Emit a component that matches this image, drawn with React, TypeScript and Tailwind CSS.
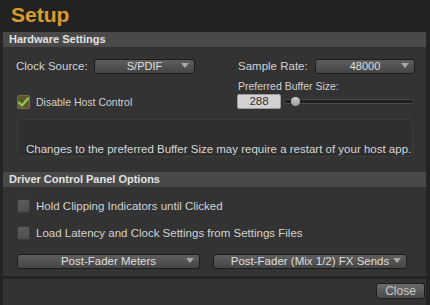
import React from "react";

function Dropdown({ label, w, size = "text-[11.5px]" }: { label: string; w: string; size?: string }) {
  return (
    <div
      className={`relative h-[15px] ${w} rounded-[3px] border border-[#1c1c1c] bg-gradient-to-b from-[#5e5e5e] to-[#454545] text-[#dedede] ${size} leading-[13px] flex items-center justify-center`}
    >
      <span>{label}</span>
      <svg className="absolute right-[5px] top-[3px]" width="8" height="5" viewBox="0 0 8 5">
        <path d="M0 0 H8 L4 5 Z" fill="#a8a8a8" />
      </svg>
    </div>
  );
}

function Check({ checked }: { checked?: boolean }) {
  return (
    <div
      className={`w-[13px] h-[14px] rounded-[2px] border flex items-center justify-center ${
        checked
          ? "border-[#7a6d45] bg-[#5f5533]"
          : "border-[#3a3a3a] bg-gradient-to-b from-[#5c5c5c] to-[#4e4e4e]"
      }`}
    >
      {checked && (
        <svg width="11" height="10" viewBox="0 0 11 10">
          <path d="M1 5.5 L4 8.5 L10 1.5" fill="none" stroke="#86d13e" strokeWidth="2.2" strokeLinecap="round" strokeLinejoin="round" />
        </svg>
      )}
    </div>
  );
}

export default function App() {
  return (
    <div
      className="w-[430px] h-[305px] bg-[#242424] flex flex-col overflow-hidden text-[#d2d2d2]"
      style={{ fontFamily: '"Liberation Sans", Arial, sans-serif' }}
    >
      <div className="h-[32px] pl-[11px] pt-[3px] bg-[#222222] text-[21px] leading-[24px] font-bold text-[#dd9b2a]">
        Setup
      </div>
      <div className="pl-[3px] pr-[4px] flex flex-col">
        {/* Hardware header */}
        <div className="h-[15px] bg-[#494949] pl-[6px] text-[11px] leading-[15px] font-bold text-[#e2e2e2]">
          Hardware Settings
        </div>
        <div className="h-[125px] bg-[#333333] pl-[14px] flex flex-col text-[11.5px]">
          <div className="mt-[12px] h-[15px] flex items-center">
            <div className="w-[221px] flex items-center">
              <span className="w-[78px] -ml-[1px] leading-[15px]">Clock Source:</span>
              <Dropdown label="S/PDIF" w="w-[101px]" size="text-[11px]" />
            </div>
            <div className="flex items-center">
              <span className="w-[77px] leading-[15px]">Sample Rate:</span>
              <Dropdown label="48000" w="w-[100px]" size="text-[11px]" />
            </div>
          </div>
          <div className="mt-[6px] h-[13px] pl-[221px] text-[10.5px] leading-[13px]">
            Preferred Buffer Size:
          </div>
          <div className="mt-[1px] h-[15px] flex items-center">
            <div className="w-[220px] flex items-center">
              <Check checked />
              <span className="ml-[6px] text-[10.5px] leading-[14px]">Disable Host Control</span>
            </div>
            <div className="w-[44px] h-[15px] rounded-[2px] border border-[#9a9a9a] bg-[#d2d2d2] text-[#333] text-[11.5px] leading-[13px] flex items-center justify-center">
              288
            </div>
            <div className="relative ml-[3px] w-[130px] h-[5px] rounded-full border border-[#4a4a4a] bg-[#1e1e1e]">
              <div className="absolute left-[6px] -top-[3px] w-[9px] h-[9px] rounded-full bg-gradient-to-b from-[#d0d0d0] to-[#9a9a9a]" />
            </div>
          </div>
          <div className="mt-[10px] w-[396px] h-[38px] rounded-[4px] border border-[#3c3c3c] bg-[#2f2f2f] pl-[8px] pt-[23px] text-[11.5px] leading-[13px] text-[#d6d6d6]">
            Changes to the preferred Buffer Size may require a restart of your host app.
          </div>
        </div>
        {/* Driver header */}
        <div className="h-[15px] bg-[#494949] pl-[6px] text-[11px] leading-[15px] font-bold text-[#e2e2e2]">
          Driver Control Panel Options
        </div>
        <div className="h-[89px] bg-[#333333] pl-[14px] flex flex-col text-[11.5px]">
          <div className="mt-[12px] h-[13px] flex items-center">
            <Check />
            <span className="ml-[6px] leading-[14px]">Hold Clipping Indicators until Clicked</span>
          </div>
          <div className="mt-[14px] h-[13px] flex items-center">
            <Check />
            <span className="ml-[6px] leading-[14px]">Load Latency and Clock Settings from Settings Files</span>
          </div>
          <div className="mt-[15px] flex items-center gap-[13px]">
            <Dropdown label="Post-Fader Meters" w="w-[183px]" />
            <Dropdown label="Post-Fader (Mix 1/2) FX Sends" w="w-[194px]" />
          </div>
        </div>
        <div className="h-[3px]" />
        <div className="h-[26px] bg-[#333333] flex justify-end pr-[1px] pt-[4px]">
          <div className="w-[49px] h-[16px] rounded-[3px] border border-[#1e1e1e] bg-gradient-to-b from-[#6c6c6c] to-[#4a4a4a] text-[#c8c8c8] text-[12px] leading-[14px] flex items-center justify-center">
            Close
          </div>
        </div>
      </div>
    </div>
  );
}
